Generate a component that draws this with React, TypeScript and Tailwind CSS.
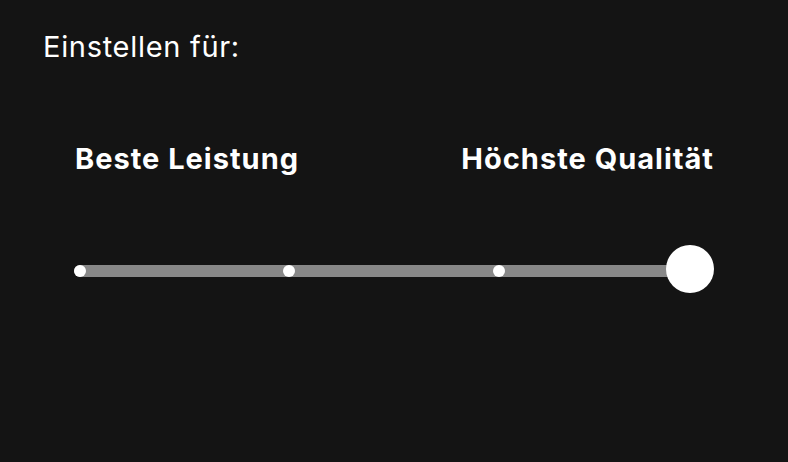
import React from 'react';

const ticks = [0, 1, 2];

export default function App() {
  return (
    <div
      className="w-[788px] h-[462px] bg-[#141414] text-white pt-[30px]"
      style={{ fontFamily: 'Inter, "Noto Sans", sans-serif' }}
    >
      <div className="pl-[43px] text-[29px] leading-[34px] tracking-[0.7px]">Einstellen für:</div>

      <div className="mt-[78px] ml-[75px] w-[639px] flex justify-between text-[29px] leading-[34px] font-bold tracking-[1px]">
        <span>Beste Leistung</span>
        <span>Höchste Qualität</span>
      </div>

      {/* slider */}
      <div className="mt-[69px] ml-[74px] w-[640px] h-12 relative">
        <div className="absolute left-0 top-[20px] h-3 w-[616px] bg-[#888888] rounded-l-full" />
        {ticks.map((i) => (
          <div
            key={i}
            className="absolute top-[20px] w-3 h-3 rounded-full bg-white"
            style={{ left: `${i * 209.33}px` }}
          />
        ))}
        <div className="absolute right-0 top-0 w-12 h-12 rounded-full bg-white" />
      </div>
    </div>
  );
}
